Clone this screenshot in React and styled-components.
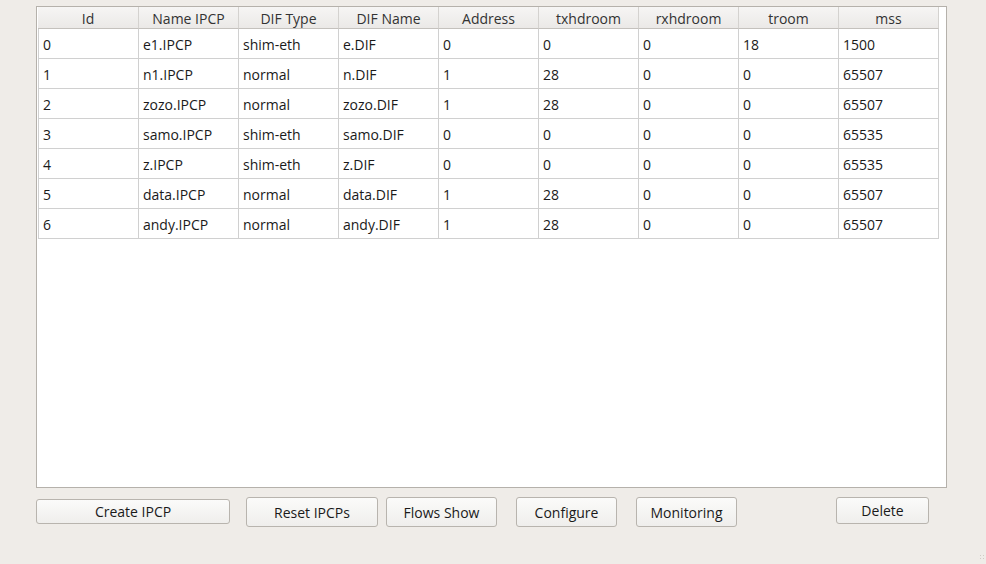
import React from 'react'
import styled, { createGlobalStyle } from "styled-components";

const Global = createGlobalStyle`
    body {
        margin: 0;
        background: #efece8;
        font-family: "Open Sans", "DejaVu Sans", sans-serif;
    }
`;

const Window = styled.div`
    width: 986px;
    height: 564px;
    box-sizing: border-box;
    padding: 6px 0 0 36px;
    position: relative;
`;

const Frame = styled.div`
    width: 911px;
    height: 482px;
    box-sizing: border-box;
    border: 1px solid #b5b1ab;
    background: #ffffff;
    padding-left: 1px;
`;

const Grid = styled.div`
    display: grid;
    grid-template-columns: 101px repeat(8, 100px);
`;

const Head = styled.div`
    height: 22px;
    box-sizing: border-box;
    display: flex;
    align-items: center;
    justify-content: center;
    font-size: 14px;
    color: #333;
    background: linear-gradient(#f6f5f4, #ebe9e7);
    border-right: 1px solid #d4d2cf;
    border-bottom: 1px solid #c4c1bd;
    padding-top: 1px;
`;

const Cell = styled.div`
    height: 30px;
    box-sizing: border-box;
    display: flex;
    align-items: center;
    padding-left: 4px;
    padding-top: 1px;
    font-size: 14px;
    color: #1a1a1a;
    border-right: 1px solid #d0d0d0;
    border-bottom: 1px solid #d0d0d0;
    border-left: ${p => (p.$first ? "1px solid #d0d0d0" : "none")};
`;

const Buttons = styled.div`
    display: flex;
    align-items: flex-start;
    margin-top: 9px;
`;

const Button = styled.button`
    width: ${p => p.$w}px;
    height: ${p => p.$h || 30}px;
    margin-left: ${p => p.$gap || 0}px;
    margin-top: ${p => p.$top || 0}px;
    box-sizing: border-box;
    border: 1px solid #b8b4ae;
    border-radius: 3px;
    background: linear-gradient(#fbfbfa, #efeeec);
    font-family: "Open Sans", "DejaVu Sans", sans-serif;
    font-size: 14px;
    color: #1a1a1a;
    padding: 0;
`;

const Grip = styled.div`
    position: absolute;
    right: 1px;
    bottom: 4px;
    width: 6px;
    height: 6px;
    background-image: radial-gradient(#cfcbc5 0.7px, transparent 1px);
    background-size: 3px 3px;
`;

const headers = ["Id", "Name IPCP", "DIF Type", "DIF Name", "Address", "txhdroom", "rxhdroom", "troom", "mss"];

const rows = [
    ["0", "e1.IPCP", "shim-eth", "e.DIF", "0", "0", "0", "18", "1500"],
    ["1", "n1.IPCP", "normal", "n.DIF", "1", "28", "0", "0", "65507"],
    ["2", "zozo.IPCP", "normal", "zozo.DIF", "1", "28", "0", "0", "65507"],
    ["3", "samo.IPCP", "shim-eth", "samo.DIF", "0", "0", "0", "0", "65535"],
    ["4", "z.IPCP", "shim-eth", "z.DIF", "0", "0", "0", "0", "65535"],
    ["5", "data.IPCP", "normal", "data.DIF", "1", "28", "0", "0", "65507"],
    ["6", "andy.IPCP", "normal", "andy.DIF", "1", "28", "0", "0", "65507"],
];

function App() {
    return (
        <Window>
            <Global />
            <Frame>
                <Grid>
                    {headers.map(h => <Head key={h}>{h}</Head>)}
                    {rows.map((r, i) =>
                        r.map((v, j) => <Cell key={i + "-" + j} $first={j === 0}>{v}</Cell>)
                    )}
                </Grid>
            </Frame>
            <Buttons>
                <Button $w={194} $h={25} $top={2}>Create IPCP</Button>
                <Button $w={132} $gap={16}>Reset IPCPs</Button>
                <Button $w={111} $gap={8}>Flows Show</Button>
                <Button $w={101} $gap={19}>Configure</Button>
                <Button $w={101} $gap={19}>Monitoring</Button>
                <Button $w={93} $h={27} $gap={99}>Delete</Button>
            </Buttons>
            <Grip />
        </Window>
    )
}

export default App
